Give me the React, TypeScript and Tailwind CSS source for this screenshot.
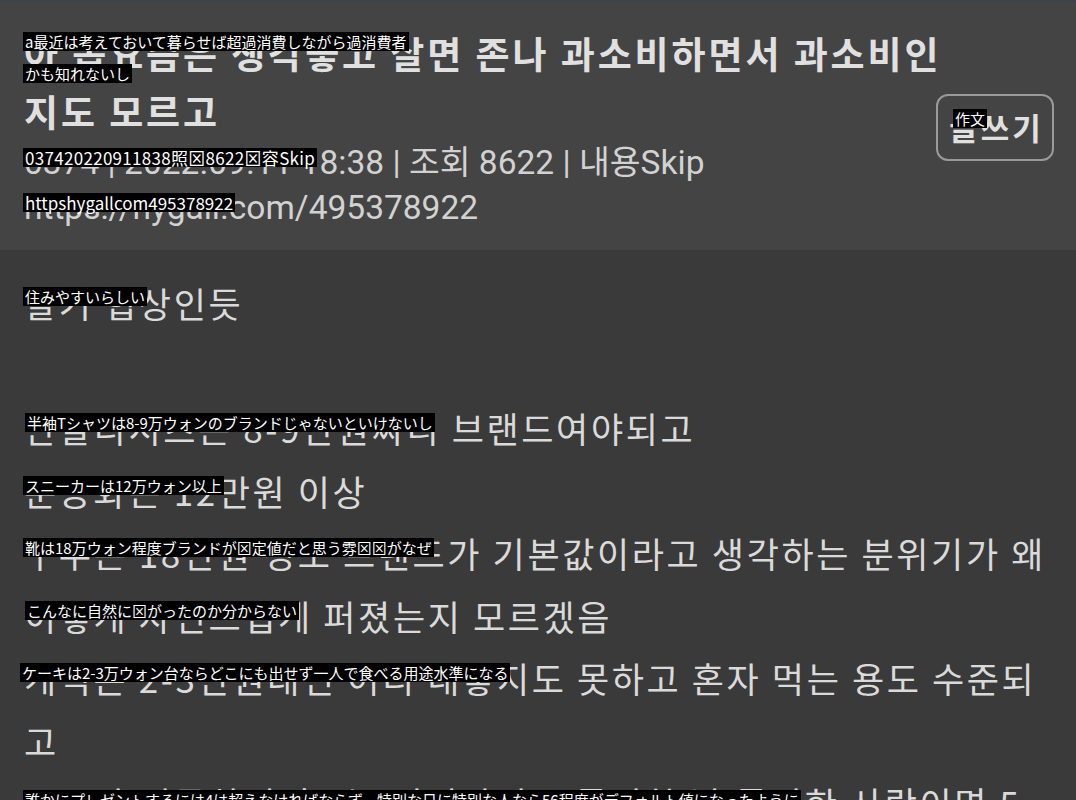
import React from "react";

const KR = { fontFamily: '"Noto Sans CJK KR", "Noto Sans", sans-serif' };
const META = { fontFamily: 'Roboto, "Noto Sans CJK KR", sans-serif' };
const JP = { fontFamily: '"Noto Sans CJK JP", "DejaVu Sans", sans-serif' };

function Ov({ text, className }: { text: string; className: string }) {
  return (
    <span
      style={JP}
      className={
        "absolute whitespace-nowrap bg-black px-[2px] font-normal leading-[19px] text-white " +
        className
      }
    >
      {text}
    </span>
  );
}

function Line({
  children,
  ov,
  ovClass,
}: {
  children: React.ReactNode;
  ov?: string;
  ovClass?: string;
}) {
  return (
    <div className="relative h-[62.5px] whitespace-nowrap text-[35px] leading-[62.5px] tracking-[2.6px] text-[#dadada]">
      {children}
      {ov ? <Ov text={ov} className={"text-[15px] tracking-normal " + (ovClass ?? "")} /> : null}
    </div>
  );
}

export default function App() {
  return (
    <div style={KR} className="h-[800px] overflow-hidden bg-[#3a3a3a]">
      <header className="flex items-center border-t-2 border-[#3c434a] bg-[#444444] pb-[20px] pl-6 pr-[22px] pt-[22px]">
        <div className="min-w-0 flex-1">
          <h1 className="relative whitespace-nowrap text-[37px] font-bold leading-[58px] tracking-[2.9px] text-[#e0e0e0]">
            아 몹요즘은 생각좋고 살면 존나 과소비하면서 과소비인
            <br />
            지도 모르고
            <Ov
              text="a最近は考えておいて暮らせば超過消費しながら過消費者"
              className="left-[-1px] top-[8px] text-[15px] tracking-normal"
            />
            <Ov
              text="かも知れないし"
              className="left-[-1px] top-[40px] text-[15px] tracking-normal"
            />
          </h1>
          <div
            style={META}
            className="relative whitespace-nowrap text-[33.5px] leading-[45px] text-[#d2d2d2]"
          >
            0374 | 2022.09.11 18:38 | 조회 8622 | 내용Skip
            <Ov
              text="037420220911838照⊠8622⊠容Skip"
              className="left-[-1px] top-[8px] text-[17px] tracking-[0.3px]"
            />
          </div>
          <div
            style={META}
            className="relative whitespace-nowrap text-[33.5px] leading-[45px] text-[#d2d2d2]"
          >
            https://hygall.com/495378922
            <Ov
              text="httpshygallcom495378922"
              className="left-[-1px] top-[8px] text-[17px] tracking-normal"
            />
          </div>
        </div>
        <button className="relative flex h-[67px] w-[118px] shrink-0 items-center justify-center rounded-[12px] border-2 border-[#9a9a9a] pl-[3px] text-[31px] font-bold tracking-[3px] text-[#e0e0e0]">
          글쓰기
          <Ov
            text="作文"
            className="left-[15px] top-[13px] px-[1px] text-[15px] tracking-normal"
          />
        </button>
      </header>
      <main className="px-6 pt-[22px]">
        <Line ov="住みやすいらしい" ovClass="left-[-1px] top-[15px]">
          살기 힙상인듯
        </Line>
        <Line>{" "}</Line>
        <Line
          ov="半袖Tシャツは8-9万ウォンのブランドじゃないといけないし"
          ovClass="left-[1px] top-[16px]"
        >
          반팔티셔츠는 8-9만원짜리 브랜드여야되고
        </Line>
        <Line ov="スニーカーは12万ウォン以上" ovClass="left-[-1px] top-[16px]">
          운동화는 12만원 이상
        </Line>
        <Line
          ov="靴は18万ウォン程度ブランドが⊠定値だと思う雰⊠⊠がなぜ"
          ovClass="left-[-1px] top-[16px]"
        >
          구두는 18만원 정도 브랜드가 기본값이라고 생각하는 분위기가 왜
        </Line>
        <Line ov="こんなに自然に⊠がったのか分からない" ovClass="left-[1px] top-[16px]">
          이렇게 자연스럽게 퍼졌는지 모르겠음
        </Line>
        <Line
          ov="ケーキは2-3万ウォン台ならどこにも出せず一人で食べる用途水準になる"
          ovClass="left-[-4px] top-[16px]"
        >
          케익은 2-3만원대면 어디 내놓지도 못하고 혼자 먹는 용도 수준되
        </Line>
        <Line>고</Line>
        <Line
          ov="誰かにプレゼントするには4は超えなければならず、特別な日に特別な人なら56程度がデフォルト値になったように"
          ovClass="left-[-1px] top-[18px]"
        >
          누군가 선물하려면 4는 넘어야되고 특별한 날 특별한 사람이면 5
        </Line>
      </main>
    </div>
  );
}
